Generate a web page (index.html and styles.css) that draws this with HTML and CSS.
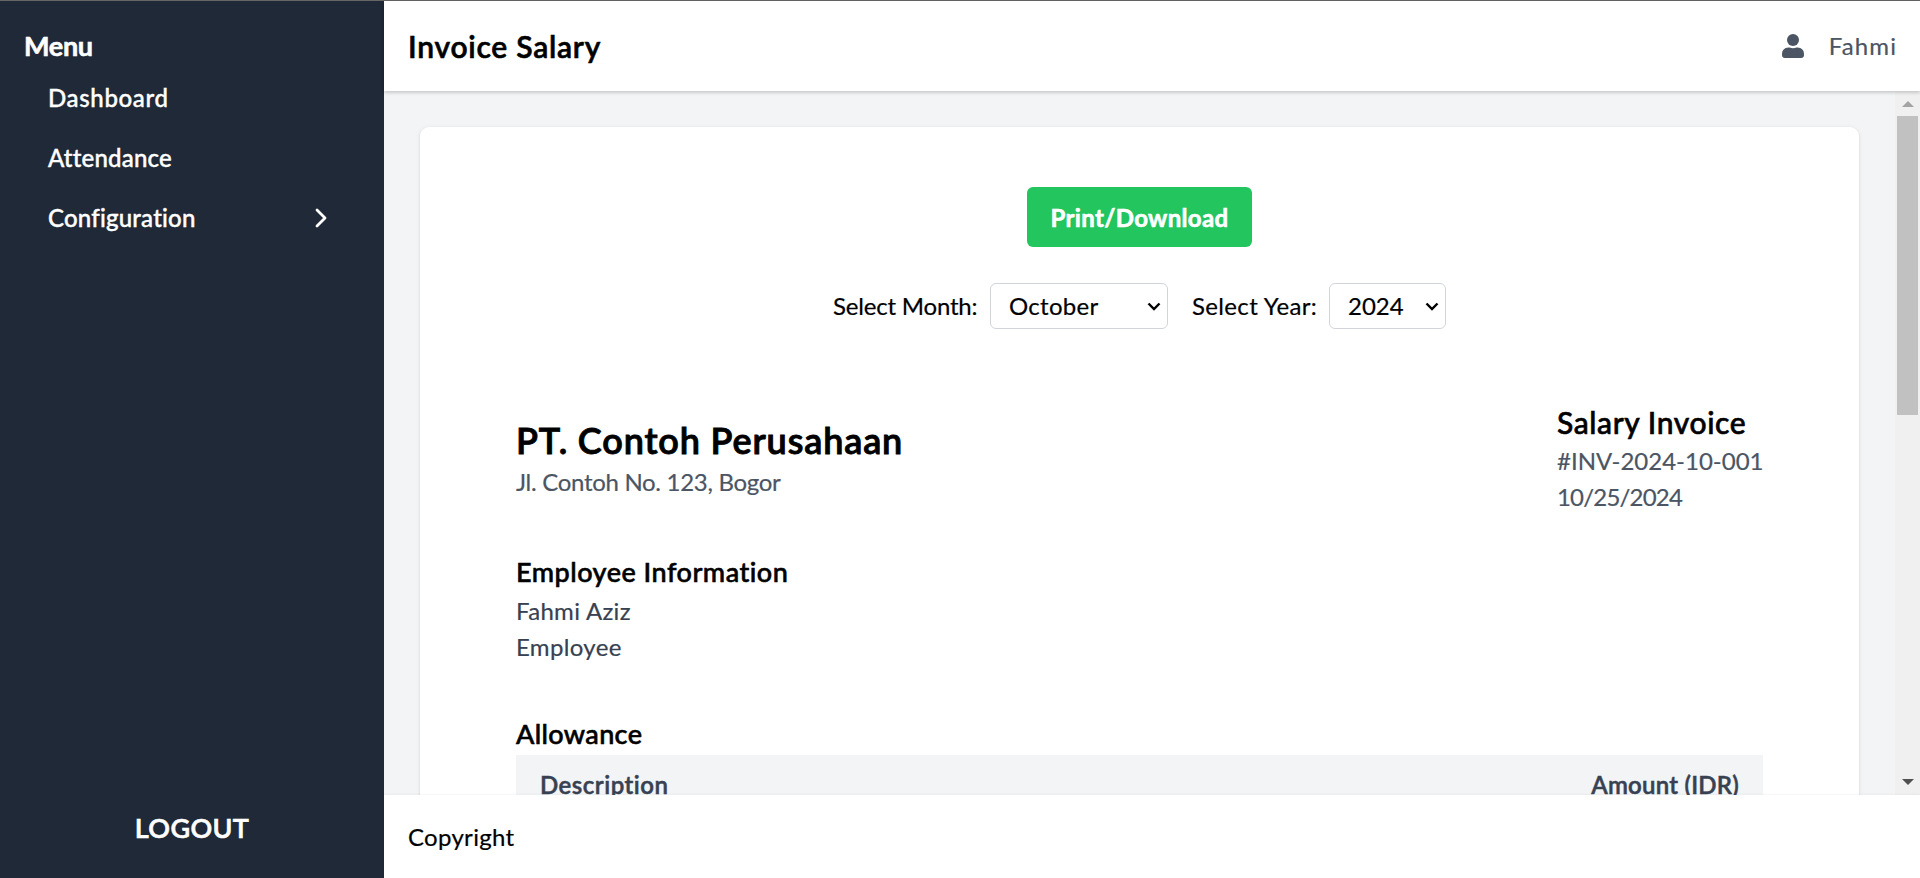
FILE: index.html
```html
<!DOCTYPE html>
<html lang="en">
<head>
<meta charset="utf-8">
<title>Invoice Salary</title>
<link rel="stylesheet" href="styles.css">
</head>
<body>
<div class="app">
  <aside class="sidebar">
    <h2 class="menu-title">Menu</h2>
    <nav class="menu">
      <a class="menu-item dashboard">Dashboard</a>
      <a class="menu-item">Attendance</a>
      <a class="menu-item">Configuration
        <svg class="chevron" width="12" height="20" viewBox="0 0 12 20"><path d="M2 2l8 8-8 8"/></svg>
      </a>
    </nav>
    <button class="logout">LOGOUT</button>
  </aside>
  <div class="content">
    <header class="header">
      <h1 class="page-title">Invoice Salary</h1>
      <div class="user">
        <svg class="user-icon" width="22" height="24" viewBox="0 0 22 24"><circle cx="11" cy="6" r="6"/><path d="M6.5 13.5h1q3.500 1.300 7 0h1Q22 14 22 20v1q0 3-3 3H3q-3 0-3-3v-1q0-6 6.500-6.500z"/></svg>
        <span class="user-name">Fahmi</span>
      </div>
    </header>
    <div class="viewport">
      <main class="main">
        <section class="card">
          <button class="print">Print/Download</button>
          <div class="filters">
            <span class="label-month">Select Month:</span>
            <div class="select month"><span class="value-month">October</span><svg width="14" height="9" viewBox="0 0 14 9"><path d="M1.500 1.500l5.500 5.500 5.500-5.500"/></svg></div>
            <span class="label-year">Select Year:</span>
            <div class="select year"><span>2024</span><svg width="14" height="9" viewBox="0 0 14 9"><path d="M1.500 1.500l5.500 5.500 5.500-5.500"/></svg></div>
          </div>
          <div class="invoice">
            <div class="invoice-head">
              <div>
                <h2 class="company">PT. Contoh Perusahaan</h2>
                <p class="address">Jl. Contoh No. 123, Bogor</p>
              </div>
              <div class="meta">
                <h3 class="invoice-title">Salary Invoice</h3>
                <p class="number">#INV-2024-10-001</p>
                <p class="date">10/25/2024</p>
              </div>
            </div>
            <div class="employee">
              <h3 class="section-title employee-title">Employee Information</h3>
              <p class="name">Fahmi Aziz</p>
              <p class="role">Employee</p>
            </div>
            <h3 class="section-title">Allowance</h3>
            <div class="table-head">
              <span class="description">Description</span>
              <span class="amount">Amount (IDR)</span>
            </div>
          </div>
        </section>
      </main>
      <div class="scrollbar">
        <svg class="arrow-up" width="12" height="6" viewBox="0 0 12 6"><path d="M0 6l6-6 6 6z"/></svg>
        <div class="thumb"></div>
        <svg class="arrow-down" width="12" height="6" viewBox="0 0 12 6"><path d="M0 0h12L6 6z"/></svg>
      </div>
    </div>
    <footer class="footer">Copyright</footer>
  </div>
</div>
</body>
</html>
```
FILE: styles.css
```css
* { box-sizing: border-box; margin: 0; padding: 0; }
body {
  font: 400 24px/36px Lato, sans-serif;
  color: #000;
  background: #f3f4f6;
  overflow: hidden;
  -webkit-text-stroke: .2px;
}
h1, h2, h3 { line-height: 42px; -webkit-text-stroke: .6px; }
button { border: 0; font-family: inherit; color: #fff; -webkit-text-stroke: .6px; }
.app { display: flex; height: 878px; border-top: 1px solid #666; }

.sidebar {
  width: 384px;
  padding: 24px;
  display: flex;
  flex-direction: column;
  background: #1f2937;
  color: #fff;
}
.menu-title { font-size: 27px; font-weight: 700; letter-spacing: -.3px; }
.menu-item {
  display: flex;
  align-items: center;
  justify-content: space-between;
  height: 60px;
  padding: 1px 33px 0 24px;
  font-weight: 500;
  letter-spacing: .2px;
  -webkit-text-stroke: .4px;
}
.dashboard { letter-spacing: .65px; }
.chevron { fill: none; stroke: #fff; stroke-width: 2.8; stroke-linecap: round; stroke-linejoin: round; }
.logout {
  margin-top: auto;
  padding-bottom: 5px;
  background: none;
  font-size: 27px;
  font-weight: 600;
  line-height: 42px;
  letter-spacing: .35px;
}

.content { flex: 1; min-width: 0; display: flex; flex-direction: column; }
.header {
  height: 90px;
  padding: 0 24px;
  display: flex;
  align-items: center;
  justify-content: space-between;
  background: #fff;
  box-shadow: 0 1px 4px rgba(0, 0, 0, .14), 0 2px 3px rgba(0, 0, 0, .08);
  z-index: 1;
}
.page-title { font-size: 30px; font-weight: 600; letter-spacing: .75px; }
.user { display: flex; align-items: center; gap: 25px; color: #4b5563; }
.user-icon { fill: #4b5563; }
.user-name { letter-spacing: 1.1px; margin-right: -1px; }

.viewport { flex: 1; min-height: 0; display: flex; overflow: hidden; }
.main { flex: 1; padding: 36px 36px 0; }
.card {
  height: 900px;
  padding: 60px 96px;
  display: flex;
  flex-direction: column;
  align-items: center;
  background: #fff;
  border-radius: 9px;
  box-shadow: 0 1px 4px rgba(0, 0, 0, .1), 0 1px 2px rgba(0, 0, 0, .06);
}
.print {
  width: 225px;
  height: 60px;
  border-radius: 6px;
  background: #22c55e;
  font-size: 24px;
  font-weight: 700;
  letter-spacing: .34px;
}
.filters { display: flex; align-items: center; height: 46px; margin: 36px 0 72px; }
.label-month { width: 157px; letter-spacing: -.2px; }
.label-year { width: 137px; margin-left: 24px; letter-spacing: .35px; }
.select {
  display: flex;
  align-items: center;
  justify-content: space-between;
  height: 46px;
  padding: 0 6px 0 18px;
  border: 1px solid #d1d5db;
  border-radius: 6px;
}
.select svg { fill: none; stroke: #000; stroke-width: 2.4; }
.month { width: 178px; }
.year { width: 117px; }
.value-month { letter-spacing: .3px; }

.invoice { width: 100%; }
.invoice-head { display: flex; justify-content: space-between; align-items: center; }
.company { font-size: 36px; font-weight: 600; line-height: 48px; letter-spacing: .85px; -webkit-text-stroke: .9px; }
.address { color: #4b5563; letter-spacing: -.3px; }
.meta { width: 206px; color: #4b5563; white-space: nowrap; }
.invoice-title { color: #000; font-size: 30px; font-weight: 500; letter-spacing: .6px; }
.number { letter-spacing: 0; }
.date { letter-spacing: -.8px; }
.employee { margin: 36px 0 48px; color: #374151; }
.section-title { color: #000; font-size: 27px; font-weight: 500; letter-spacing: .35px; }
.employee-title { letter-spacing: .5px; }
.name { letter-spacing: .31px; }
.role { letter-spacing: .35px; }
.table-head {
  display: flex;
  justify-content: space-between;
  padding: 12px 24px;
  background: #f3f4f6;
  color: #374151;
  font-weight: 600;
  -webkit-text-stroke: .5px;
}
.description { letter-spacing: .5px; }
.amount { letter-spacing: .23px; }

.scrollbar {
  width: 25px;
  padding: 10px 0;
  display: flex;
  flex-direction: column;
  align-items: center;
  background: #f0f0f0;
}
.thumb { width: 21px; height: 299px; margin-top: 9px; background: #c1c1c1; }
.arrow-up { fill: #a3a3a3; }
.arrow-down { fill: #505050; margin-top: auto; }

.footer {
  height: 83px;
  padding: 24px;
  background: #fff;
  letter-spacing: .3px;
  box-shadow: 0 -1px 2px rgba(0, 0, 0, .04);
}
```
